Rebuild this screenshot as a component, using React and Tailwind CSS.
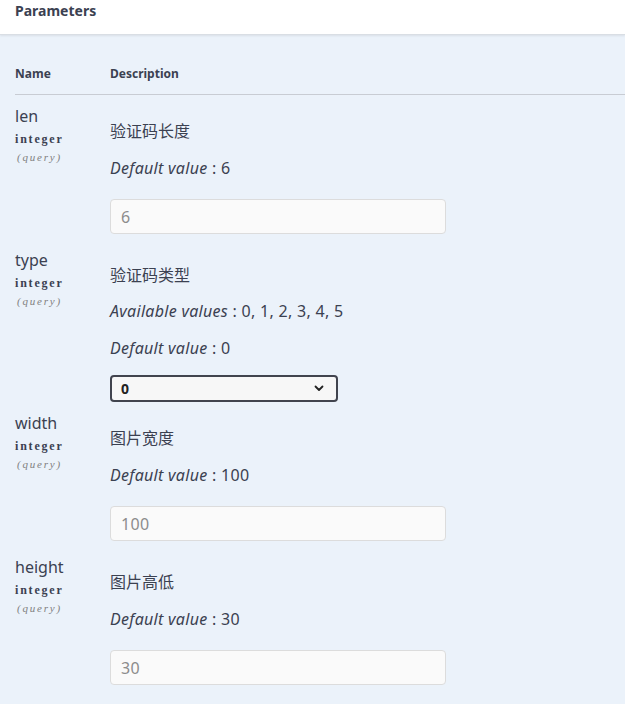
const params = [
  { name: 'len', desc: '验证码长度', def: '6', kind: 'input' },
  { name: 'type', desc: '验证码类型', avail: '0, 1, 2, 3, 4, 5', def: '0', kind: 'select' },
  { name: 'width', desc: '图片宽度', def: '100', kind: 'input' },
  { name: 'height', desc: '图片高低', def: '30', kind: 'input' },
];

const sans = "font-['Noto_Sans','Noto_Sans_CJK_SC',sans-serif]";

function ParamRow({ p }) {
  return (
    <div className="flex pt-[10px]">
      <div className="w-[95px] shrink-0">
        <div className="text-[16px] leading-[22px] text-[#3b4151]">{p.name}</div>
        <div className="font-['Liberation_Serif',serif] font-bold text-[12px] leading-[14px] tracking-[1.8px] text-[#3b4151] pt-[5px]">integer</div>
        <div className="font-['Liberation_Serif',serif] italic text-[11px] leading-[14px] tracking-[1.8px] text-[#808080] pt-[4px] pl-[2px]">(query)</div>
      </div>
      <div className="flex-1 tracking-[0.3px]">
        <p className="mt-[15px] text-[16px] leading-[22px] text-[#3b4151] tracking-normal">{p.desc}</p>
        {p.avail && (
          <p className="mt-[14px] text-[16px] leading-[22px] text-[#3b4151]">
            <i>Available values</i> : {p.avail}
          </p>
        )}
        <p className="mt-[15px] text-[16px] leading-[22px] text-[#3b4151]">
          <i>Default value</i> : {p.def}
        </p>
        {p.kind === 'input' ? (
          <div className="mt-[20px] mb-[5px] w-[336px] h-[35px] bg-[#fafafa] border border-[#dcdcdc] rounded-[4px] px-[10px] flex items-center text-[16px] text-[#8c8c8c]">
            {p.def}
          </div>
        ) : (
          <div className="mt-[16px] w-[228px] h-[27px] bg-[#f7f7f7] border-2 border-[#41444e] rounded-[4px] pl-[9px] pr-[12px] flex items-center justify-between text-[14px] font-bold text-[#222]">
            <span>{p.def}</span>
            <svg width="10" height="7" viewBox="0 0 10 7" fill="none">
              <path d="M1.5 1.5 L5 5 L8.5 1.5" stroke="#222" strokeWidth="1.8" strokeLinecap="round" strokeLinejoin="round" />
            </svg>
          </div>
        )}
      </div>
    </div>
  );
}

export default function App() {
  return (
    <div className={`${sans} w-[625px] h-[704px] overflow-hidden bg-[#ebf2fa]`}>
      <div className="h-[35px] bg-white border-b border-[#d9dee4] shadow-[0_1px_2px_rgba(0,0,0,0.08)] px-[15px] pt-[1px]">
        <h4 className="text-[14px] leading-[20px] font-bold text-[#3b4151]">Parameters</h4>
      </div>
      <div className="pl-[15px]">
        <div className="flex pt-[31px] pb-[12px] border-b border-[#c8ccd3] text-[12px] leading-[16px] font-bold text-[#3b4151]">
          <div className="w-[95px]">Name</div>
          <div>Description</div>
        </div>
        {params.map(p => (
          <ParamRow key={p.name} p={p} />
        ))}
      </div>
    </div>
  );
}
